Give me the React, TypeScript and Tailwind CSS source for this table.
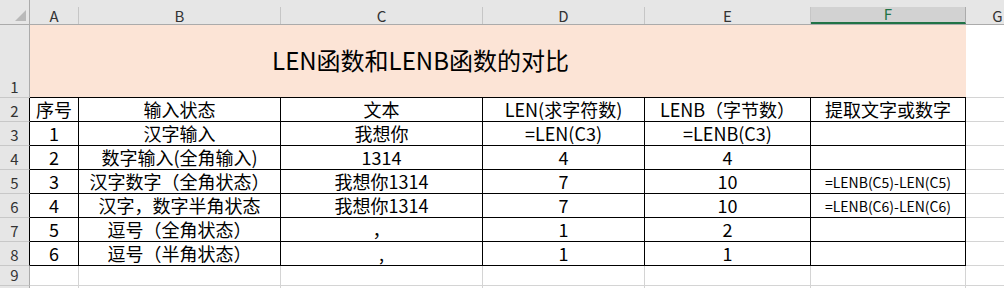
import React from "react";

const colW = ["w-[49px]", "w-[202px]", "w-[202px]", "w-[162px]", "w-[166px]", "w-[155px]"];
const letters = ["A", "B", "C", "D", "E", "F"];

const rows: string[][] = [
  ["序号", "输入状态", "文本", "LEN(求字符数)", "LENB（字节数）", "提取文字或数字"],
  ["1", "汉字输入", "我想你", "=LEN(C3)", "=LENB(C3)", ""],
  ["2", "数字输入(全角输入)", "1314", "4", "4", ""],
  ["3", "汉字数字（全角状态）", "我想你1314", "7", "10", "=LENB(C5)-LEN(C5)"],
  ["4", "汉字，数字半角状态", "我想你1314", "7", "10", "=LENB(C6)-LEN(C6)"],
  ["5", "逗号（全角状态）", "，", "1", "2", ""],
  ["6", "逗号（半角状态）", ",", "1", "1", ""],
];

const font = "font-['Noto_Sans_CJK_SC','Noto_Sans',sans-serif]";

function RowHead({ n, h, dark }: { n?: number; h: string; dark?: boolean }) {
  return (
    <div
      className={`${h} w-[30px] shrink-0 bg-[#e6e6e6] border-b border-b-[#c8c8c8] border-r ${
        dark ? "border-r-black" : "border-r-[#ababab]"
      } flex items-end justify-center pb-[1px] text-[15px] leading-[18px] text-[#333]`}
    >
      {n}
    </div>
  );
}

export default function App() {
  return (
    <div className={`w-[1004px] h-[288px] overflow-hidden bg-white ${font} text-black`}>
      {/* column header */}
      <div className="flex h-[25px] bg-[#e6e6e6] border-b border-b-[#ababab] items-end">
        <div className="w-[30px] h-[24px] shrink-0 border-r border-r-[#ababab] relative">
          <svg className="absolute left-0 top-0" width="30" height="24" viewBox="0 0 30 24">
            <polygon points="26,10 26,21 15,21" fill="#b9b9b9" />
          </svg>
        </div>
        {letters.map((l, i) =>
          i === 5 ? (
            <div
              key={l}
              className={`${colW[i]} shrink-0 h-[17px] bg-[#d2d2d2] border-r border-r-[#ababab] border-b-2 border-b-[#217346] flex items-end justify-center text-[15px] leading-[17px] text-[#217346]`}
            >
              {l}
            </div>
          ) : (
            <div
              key={l}
              className={`${colW[i]} shrink-0 h-[17px] border-r border-r-[#c6c6c6] flex items-end justify-center text-[15px] leading-[17px] text-[#333]`}
            >
              {l}
            </div>
          )
        )}
        <div className="w-[64px] shrink-0 h-[17px] border-r border-r-[#c6c6c6] flex items-end justify-center text-[15px] leading-[17px] text-[#333]">
          G
        </div>
      </div>

      {/* row 1 */}
      <div className="flex h-[73px]">
        <RowHead n={1} h="h-[73px]" />
        <div className="w-[781px] shrink-0 h-[73px] bg-[#fce4d6] border-b border-b-black flex items-center justify-center pb-[2px] text-[24px] leading-[34px]">
          LEN函数和LENB函数的对比
        </div>
        <div className="w-[155px] shrink-0 h-[73px] bg-[#fce4d6] border-b border-b-black" />
        <div className="w-[64px] shrink-0 h-[73px] border-b border-b-[#d4d4d4] border-r border-r-[#d4d4d4]" />
      </div>

      {/* rows 2-8 */}
      {rows.map((r, ri) => (
        <div key={ri} className="flex h-[24px]">
          <RowHead n={ri + 2} h="h-[24px]" dark />
          {r.map((c, ci) => (
            <div
              key={ci}
              className={`${colW[ci]} shrink-0 h-[24px] border-r border-b border-black text-center whitespace-nowrap ${
                ci === 5 && ri > 0 ? "text-[14px] leading-[23px] pt-[1px]" : "text-[18px] leading-[23px]"
              }`}
            >
              {c}
            </div>
          ))}
          <div className="w-[64px] shrink-0 h-[24px] border-r border-b border-[#d4d4d4]" />
        </div>
      ))}

      {/* row 9 */}
      <div className="flex h-[20px]">
        <RowHead n={9} h="h-[20px]" />
        {colW.map((w, i) => (
          <div key={i} className={`${w} shrink-0 h-[20px] border-r border-b border-[#d4d4d4]`} />
        ))}
        <div className="w-[64px] shrink-0 h-[20px] border-r border-b border-[#d4d4d4]" />
      </div>
      {/* row 10 (only its top sliver is visible) */}
      <div className="flex h-[24px]">
        <RowHead h="h-[24px]" />
        {colW.map((w, i) => (
          <div key={i} className={`${w} shrink-0 h-[24px] border-r border-b border-[#d4d4d4]`} />
        ))}
        <div className="w-[64px] shrink-0 h-[24px] border-r border-b border-[#d4d4d4]" />
      </div>
    </div>
  );
}
